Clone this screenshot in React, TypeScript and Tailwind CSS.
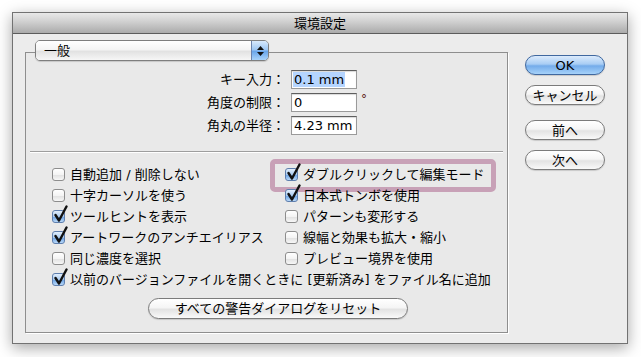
import React from "react";

const FONT =
  "font-['Lucida_Grande','DejaVu_Sans','Noto_Sans_CJK_JP',sans-serif]";

function Check({ on = false }: { on?: boolean }) {
  return (
    <span
      className={
        "relative w-[13px] h-[13px] shrink-0 rounded-[3px] border " +
        (on
          ? "border-[#5f7fae] bg-[linear-gradient(to_bottom,#e3effc_0%,#a9cbf1_50%,#6fa6e6_55%,#b9d8f8_100%)]"
          : "border-[#8d8d8d] bg-[linear-gradient(to_bottom,#ffffff_0%,#f4f4f4_50%,#e2e2e2_55%,#f7f7f7_100%)]")
      }
    >
      {on && (
        <svg
          className="absolute -top-[6px] left-[0px] w-[15px] h-[18px]"
          viewBox="0 0 15 18"
        >
          <path
            d="M2.5 10 L6 15.5 L13.5 1.5"
            stroke="#111"
            strokeWidth="2.4"
            strokeLinecap="round"
            strokeLinejoin="round"
            fill="none"
          />
        </svg>
      )}
    </span>
  );
}

function Row({
  on,
  label,
  className = "",
}: {
  on?: boolean;
  label: string;
  className?: string;
}) {
  return (
    <div className={"flex items-center gap-[5px] h-[21px] " + className}>
      <Check on={on} />
      <span className="text-[13px] leading-none whitespace-nowrap">{label}</span>
    </div>
  );
}

function AquaButton({
  children,
  primary = false,
  className = "",
}: {
  children: React.ReactNode;
  primary?: boolean;
  className?: string;
}) {
  return (
    <div
      className={
        "flex items-center justify-center rounded-full border text-[13px] leading-none shadow-[0_1px_1px_rgba(0,0,0,0.15)] " +
        (primary
          ? "border-[#40689f] bg-[linear-gradient(to_bottom,#dcebfc_0%,#a8cdf4_45%,#74acea_55%,#a6d2fa_100%)]"
          : "border-[#7b7b7b] bg-[linear-gradient(to_bottom,#ffffff_0%,#f5f5f5_45%,#e3e3e3_55%,#f9f9f9_100%)]") +
        " " +
        className
      }
    >
      {children}
    </div>
  );
}

function Field({
  label,
  value,
  selected,
  suffix,
}: {
  label: string;
  value: string;
  selected?: boolean;
  suffix?: string;
}) {
  return (
    <div className="flex items-center h-[19px]">
      <span className="w-[259px] text-right text-[13px] leading-none whitespace-nowrap">
        {label}
      </span>
      <div className="ml-[6px] w-[66px] h-[19px] flex items-center bg-white border border-[#9a9a9a] border-t-[#5e5e5e] pl-[1px] shadow-[inset_0_1px_1px_rgba(0,0,0,0.15)]">
        <span
          className={
            "text-[13px] leading-[15px] px-[1px] " +
            (selected ? "bg-[#b5d5ff]" : "")
          }
        >
          {value}
        </span>
      </div>
      {suffix && (
        <span className="ml-[4px] -mt-[8px] text-[12px] leading-none text-[#5a1a10]">
          {suffix}
        </span>
      )}
    </div>
  );
}

export default function App() {
  return (
    <div
      className={
        "w-[641px] h-[357px] bg-white overflow-hidden pt-[12px] pl-[12px] text-black " +
        FONT
      }
    >
      <div className="w-[616px] bg-[#ececec] border border-[#727272] shadow-[0_4px_14px_rgba(0,0,0,0.35)]">
        <div className="h-[21px] flex items-center justify-center border-b border-[#5c5c5c] bg-[linear-gradient(to_bottom,#e8e8e8_0%,#d2d2d2_40%,#ababab_100%)]">
          <span className="text-[13px] leading-none">環境設定</span>
        </div>

        <div className="flex pl-[12px] pb-[10px]">
          <div className="relative mt-[18px] w-[483px] border border-[#8e8e8e] bg-[#e9e9e9] shadow-[1px_1px_0_#ffffff] pb-[13px]">
            <div className="absolute left-[244px] top-[106px] w-[226px] h-[33px] rounded-[5px] border-[5px] border-[#c8a1b7]" />

            <div className="relative">
              <div className="ml-[9px] -mt-[13px] w-[234px] h-[21px] flex rounded-[5px] border border-[#7e7e7e] overflow-hidden shadow-[0_1px_1px_rgba(0,0,0,0.15)]">
                <div className="flex-1 flex items-center pl-[8px] bg-[linear-gradient(to_bottom,#ffffff_0%,#f4f4f4_45%,#e2e2e2_55%,#f6f6f6_100%)]">
                  <span className="text-[13px] leading-none">一般</span>
                </div>
                <div className="w-[17px] flex flex-col items-center justify-center gap-[2px] border-l border-[#6b83ad] bg-[linear-gradient(to_bottom,#d8e9fc_0%,#9ec7f3_45%,#6aa6ea_55%,#a9d3fa_100%)]">
                  <svg width="7" height="4" viewBox="0 0 7 4">
                    <path d="M3.5 0 L7 4 L0 4 Z" fill="#111" />
                  </svg>
                  <svg width="7" height="4" viewBox="0 0 7 4">
                    <path d="M0 0 L7 0 L3.5 4 Z" fill="#111" />
                  </svg>
                </div>
              </div>

              <div className="mt-[9px] flex flex-col gap-[4px]">
                <Field label="キー入力：" value="0.1 mm" selected />
                <Field label="角度の制限：" value="0" suffix="°" />
                <Field label="角丸の半径：" value="4.23 mm" />
              </div>

              <div className="mt-[16px] mx-[4px] h-px bg-[#9e9e9e] shadow-[0_1px_0_#ffffff]" />

              <div className="mt-[12px] pl-[26px] grid grid-cols-[233px_auto]">
                <Row label="自動追加 / 削除しない" />
                <Row on label="ダブルクリックして編集モード" />
                <Row label="十字カーソルを使う" />
                <Row on label="日本式トンボを使用" />
                <Row on label="ツールヒントを表示" />
                <Row label="パターンも変形する" />
                <Row on label="アートワークのアンチエイリアス" />
                <Row label="線幅と効果も拡大・縮小" />
                <Row label="同じ濃度を選択" />
                <Row label="プレビュー境界を使用" />
                <Row
                  on
                  className="col-span-2"
                  label="以前のバージョンファイルを開くときに [更新済み] をファイル名に追加"
                />
              </div>

              <AquaButton className="mt-[8px] ml-[122px] w-[260px] h-[21px]">
                すべての警告ダイアログをリセット
              </AquaButton>
            </div>
          </div>

          <div className="ml-[17px] mt-[21px] flex flex-col">
            <AquaButton primary className="w-[80px] h-[20px]">
              OK
            </AquaButton>
            <AquaButton className="mt-[10px] w-[80px] h-[20px]">
              キャンセル
            </AquaButton>
            <AquaButton className="mt-[15px] w-[80px] h-[20px]">
              前へ
            </AquaButton>
            <AquaButton className="mt-[10px] w-[80px] h-[20px]">
              次へ
            </AquaButton>
          </div>
        </div>
      </div>
    </div>
  );
}
